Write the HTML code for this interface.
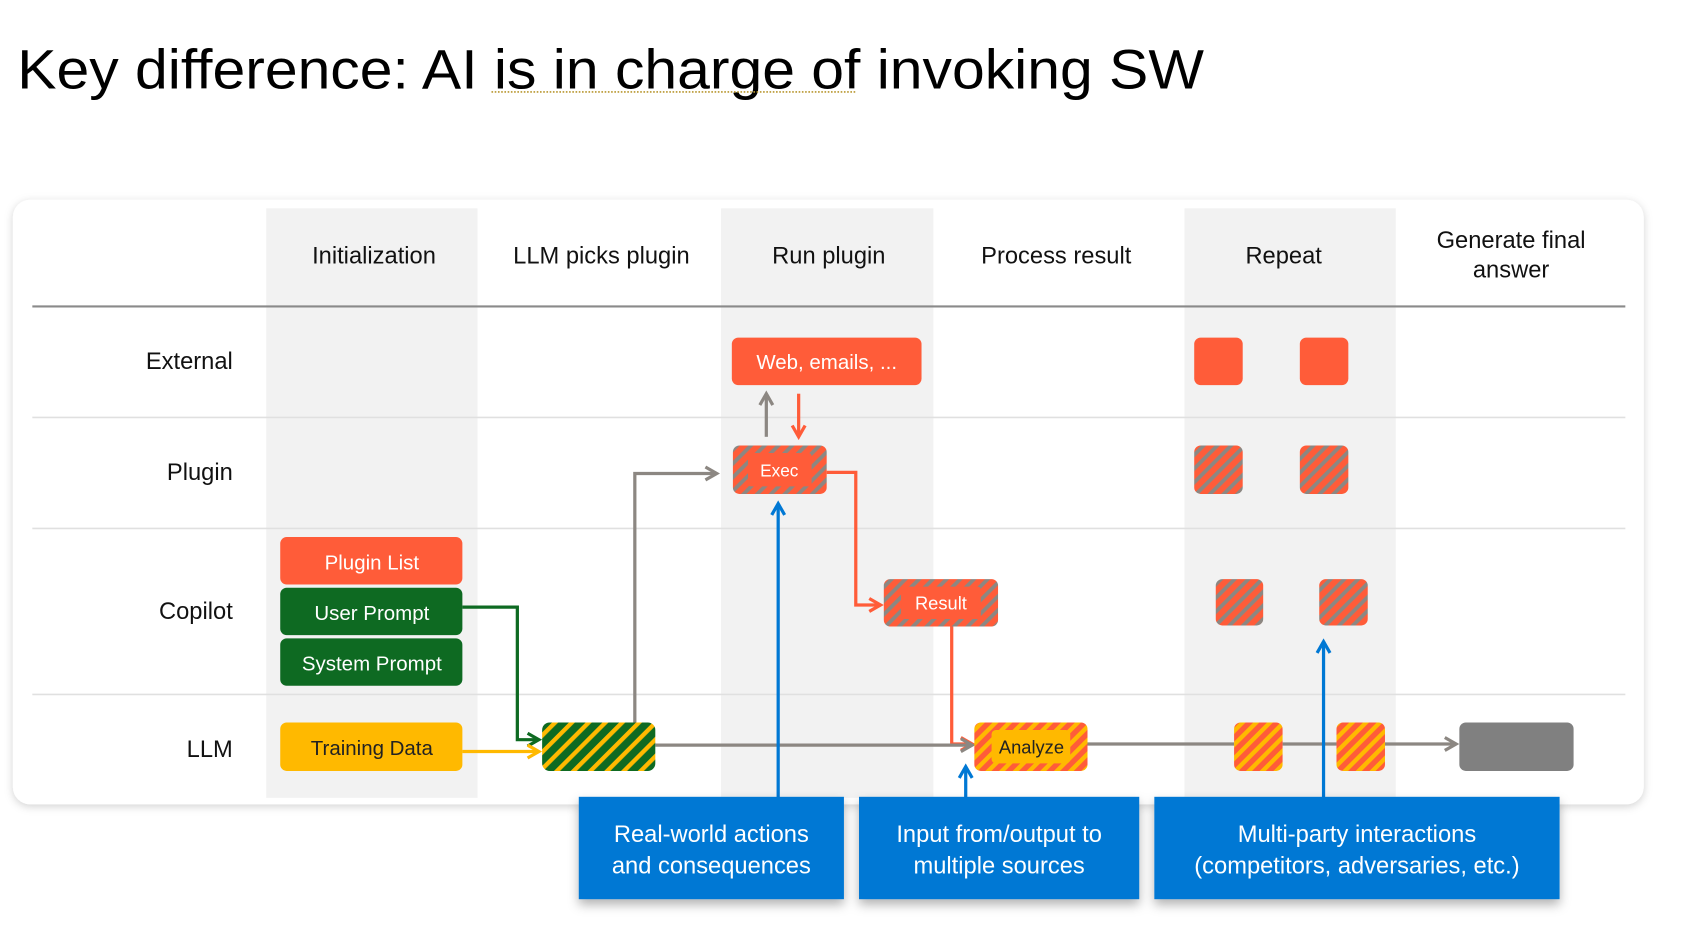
<!DOCTYPE html>
<html><head><meta charset="utf-8"><style>
html,body{margin:0;padding:0;background:#fff;width:1690px;height:934px;overflow:hidden}
svg{display:block}
text{font-family:"Liberation Sans",sans-serif}
</style></head><body>
<svg width="1690" height="934" viewBox="0 0 1568 866" xmlns="http://www.w3.org/2000/svg">
<defs>
<pattern id="og" width="9" height="9" patternUnits="userSpaceOnUse" patternTransform="rotate(45)"><rect width="9" height="9" fill="#FF5C39"/><rect width="3.5" height="9" fill="#8C8782"/></pattern>
<pattern id="oy" width="9" height="9" patternUnits="userSpaceOnUse" patternTransform="rotate(45)"><rect width="9" height="9" fill="#FF5C39"/><rect width="4" height="9" fill="#FFB900"/></pattern>
<pattern id="gy" width="11" height="11" patternUnits="userSpaceOnUse" patternTransform="rotate(45)"><rect width="11" height="11" fill="#0E6A22"/><rect width="4" height="11" fill="#FFB900"/></pattern>
<filter id="sh" x="-5%" y="-5%" width="110%" height="115%"><feDropShadow dx="0" dy="2" stdDeviation="4" flood-color="#000" flood-opacity="0.18"/></filter>
<filter id="sh2" x="-10%" y="-10%" width="120%" height="140%"><feDropShadow dx="0" dy="5" stdDeviation="5" flood-color="#000" flood-opacity="0.3"/></filter>
<marker id="ag" viewBox="0 0 10 10" refX="8" refY="5" markerWidth="5" markerHeight="5" orient="auto"><path d="M1,1 L8,5 L1,9" fill="none" stroke="#8C8782" stroke-width="2"/></marker>
<marker id="ao" viewBox="0 0 10 10" refX="8" refY="5" markerWidth="5" markerHeight="5" orient="auto"><path d="M1,1 L8,5 L1,9" fill="none" stroke="#FF5C39" stroke-width="2"/></marker>
<marker id="ab" viewBox="0 0 10 10" refX="8" refY="5" markerWidth="5" markerHeight="5" orient="auto"><path d="M1,1 L8,5 L1,9" fill="none" stroke="#0078D4" stroke-width="2"/></marker>
<marker id="agr" viewBox="0 0 10 10" refX="8" refY="5" markerWidth="5" markerHeight="5" orient="auto"><path d="M1,1 L8,5 L1,9" fill="none" stroke="#0E6A22" stroke-width="2"/></marker>
<marker id="ay" viewBox="0 0 10 10" refX="8" refY="5" markerWidth="5" markerHeight="5" orient="auto"><path d="M1,1 L8,5 L1,9" fill="none" stroke="#FFB900" stroke-width="2"/></marker>
</defs>

<text x="16" y="82" font-size="52" textLength="1101" lengthAdjust="spacingAndGlyphs" fill="#000">Key difference: AI is in charge of invoking SW</text>
<line x1="456" y1="85" x2="795" y2="85" stroke="#B8962E" stroke-width="1.5" stroke-dasharray="1.5 1.5"/>

<rect x="12" y="185" width="1513" height="561" rx="16" fill="#fff" filter="url(#sh)"/>
<g fill="#F2F2F2">
<rect x="247" y="193" width="196" height="547"/>
<rect x="669" y="193" width="197" height="547"/>
<rect x="1099" y="193" width="196" height="547"/>
</g>

<g font-size="22" fill="#111" text-anchor="middle">
<text x="347" y="244">Initialization</text>
<text x="558" y="244">LLM picks plugin</text>
<text x="769" y="244">Run plugin</text>
<text x="980" y="244">Process result</text>
<text x="1191" y="244">Repeat</text>
<text x="1402" y="230">Generate final</text>
<text x="1402" y="257">answer</text>
</g>
<line x1="30" y1="284" x2="1508" y2="284" stroke="#8a8a8a" stroke-width="2"/>
<g stroke="#E0E0E0" stroke-width="1.5">
<line x1="30" y1="387" x2="1508" y2="387"/>
<line x1="30" y1="490" x2="1508" y2="490"/>
<line x1="30" y1="644" x2="1508" y2="644"/>
</g>
<g font-size="22" fill="#111" text-anchor="end">
<text x="216" y="342">External</text>
<text x="216" y="445">Plugin</text>
<text x="216" y="574">Copilot</text>
<text x="216" y="702">LLM</text>
</g>

<!-- lines -->
<g fill="none" stroke-width="3">
<polyline points="589,670 589,439 665,439" stroke="#8C8782" marker-end="url(#ag)"/>
<line x1="711" y1="405" x2="711" y2="365" stroke="#8C8782" marker-end="url(#ag)"/>
<line x1="741" y1="365" x2="741" y2="405" stroke="#FF5C39" marker-end="url(#ao)"/>
<polyline points="767,438 794,438 794,561 817,561" stroke="#FF5C39" marker-end="url(#ao)"/>
<polyline points="883,581 883,690 902,690" stroke="#FF5C39" marker-end="url(#ao)"/>
<line x1="608" y1="691" x2="902" y2="691" stroke="#8C8782" marker-end="url(#ag)"/>
<line x1="1009" y1="690" x2="1145" y2="690" stroke="#8C8782"/>
<line x1="1190" y1="690" x2="1240" y2="690" stroke="#8C8782"/>
<line x1="1285" y1="690" x2="1351" y2="690" stroke="#8C8782" marker-end="url(#ag)"/>
<polyline points="429,563 480,563 480,686 500,686" stroke="#0E6A22" marker-end="url(#agr)"/>
<line x1="429" y1="697" x2="500" y2="697" stroke="#FFB900" marker-end="url(#ay)"/>
<line x1="722" y1="740" x2="722" y2="467" stroke="#0078D4" marker-end="url(#ab)"/>
<line x1="896" y1="740" x2="896" y2="711" stroke="#0078D4" marker-end="url(#ab)"/>
<line x1="1228" y1="740" x2="1228" y2="595" stroke="#0078D4" marker-end="url(#ab)"/>
</g>

<!-- boxes -->
<rect x="679" y="313" width="176" height="44" rx="6" fill="#FF5C39"/>
<text x="767" y="342" font-size="19" fill="#fff" text-anchor="middle">Web, emails, ...</text>

<rect x="680" y="413" width="87" height="45" rx="6" fill="url(#og)"/>
<rect x="694" y="420" width="59" height="31" rx="3" fill="#FF5C39"/>
<text x="723" y="442" font-size="16" fill="#fff" text-anchor="middle">Exec</text>

<rect x="820" y="537" width="106" height="44" rx="6" fill="url(#og)"/>
<rect x="836" y="544" width="74" height="30" rx="3" fill="#FF5C39"/>
<text x="873" y="565" font-size="17" fill="#fff" text-anchor="middle">Result</text>

<rect x="1108" y="313" width="45" height="44" rx="6" fill="#FF5C39"/>
<rect x="1206" y="313" width="45" height="44" rx="6" fill="#FF5C39"/>
<rect x="1108" y="413" width="45" height="45" rx="6" fill="url(#og)"/>
<rect x="1206" y="413" width="45" height="45" rx="6" fill="url(#og)"/>
<rect x="1128" y="537" width="44" height="43" rx="6" fill="url(#og)"/>
<rect x="1224" y="537" width="45" height="43" rx="6" fill="url(#og)"/>

<rect x="260" y="498" width="169" height="44" rx="6" fill="#FF5C39"/>
<text x="345" y="528" font-size="19" fill="#fff" text-anchor="middle">Plugin List</text>
<rect x="260" y="545" width="169" height="44" rx="6" fill="#0E6A22"/>
<text x="345" y="575" font-size="19" fill="#fff" text-anchor="middle">User Prompt</text>
<rect x="260" y="592" width="169" height="44" rx="6" fill="#0E6A22"/>
<text x="345" y="622" font-size="19" fill="#fff" text-anchor="middle">System Prompt</text>
<rect x="260" y="670" width="169" height="45" rx="6" fill="#FFB900"/>
<text x="345" y="700" font-size="19" fill="#222" text-anchor="middle">Training Data</text>

<rect x="503" y="670" width="105" height="45" rx="7" fill="url(#gy)"/>

<rect x="904" y="670" width="105" height="45" rx="6" fill="url(#oy)"/>
<rect x="920" y="677" width="73" height="31" rx="4" fill="#FFB900"/>
<text x="957" y="699" font-size="17" fill="#222" text-anchor="middle">Analyze</text>

<rect x="1145" y="670" width="45" height="45" rx="6" fill="url(#oy)"/>
<rect x="1240" y="670" width="45" height="45" rx="6" fill="url(#oy)"/>
<rect x="1354" y="670" width="106" height="45" rx="6" fill="#808080"/>

<!-- callouts -->
<g filter="url(#sh2)" fill="#0078D4">
<rect x="537" y="739" width="246" height="95"/>
<rect x="797" y="739" width="260" height="95"/>
<rect x="1071" y="739" width="376" height="95"/>
</g>
<g font-size="22" fill="#fff" text-anchor="middle">
<text x="660" y="781">Real-world actions</text>
<text x="660" y="810">and consequences</text>
<text x="927" y="781">Input from/output to</text>
<text x="927" y="810">multiple sources</text>
<text x="1259" y="781">Multi-party interactions</text>
<text x="1259" y="810">(competitors, adversaries, etc.)</text>
</g>
</svg>
</body></html>
